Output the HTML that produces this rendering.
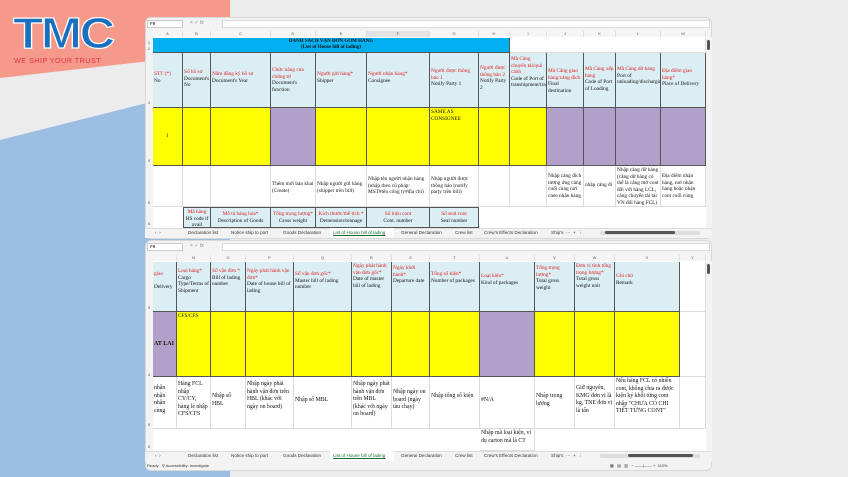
<!DOCTYPE html><html><head><meta charset="utf-8"><style>
*{margin:0;padding:0;box-sizing:border-box}
body{width:848px;height:477px;overflow:hidden;position:relative;background:#ececec;font-family:"Liberation Serif","Noto Serif CJK SC",serif}
.a{position:absolute}
.w{position:absolute;background:#f3f3f3;border-radius:6px;border:1px solid #d8d8d8;overflow:hidden}
.c{position:absolute;border-right:1px solid #555;border-bottom:1px solid #555;font-size:5.3px;line-height:6.6px;padding:1px;color:#111;overflow:hidden}
.g{position:absolute;border-right:1px solid #dcdcdc;border-bottom:1px solid #dcdcdc;font-size:5.3px;line-height:6.6px;padding:1px;color:#111;overflow:hidden;background:#fff}
.h{background:#daeef3}.y{background:#ffff00}.p{background:#b1a0c7}
.r{color:#e02020}
.ch{position:absolute;font-family:"Liberation Sans",sans-serif;font-size:4px;color:#555;text-align:center;background:#f5f5f5;border-right:1px solid #ddd;height:6px;line-height:6px}
.rh{position:absolute;font-family:"Liberation Sans",sans-serif;font-size:4px;color:#555;width:8px;text-align:center}
.tab{position:absolute;font-family:"Liberation Sans",sans-serif;font-size:4.6px;color:#333;white-space:nowrap}
</style></head><body>
<svg class="a" style="left:0;top:0" width="848" height="477">
<polygon points="0,0 230,0 230,52 0,78" fill="#f59a8a"/>
<polygon points="0,140 230,82 230,477 0,477" fill="#9bbee2"/>
</svg>
<div class="a" style="left:13px;top:9px;font-family:'Liberation Sans',sans-serif;font-weight:900;font-size:44px;color:#1a6fc0;letter-spacing:-2px;-webkit-text-stroke:1.2px #fff;transform:scaleX(1.12);transform-origin:left">TMC</div>
<div class="a" style="left:14px;top:56px;font-family:'Liberation Sans',sans-serif;font-size:7.3px;color:#e03040;letter-spacing:0.4px">WE SHIP YOUR TRUST</div>

<!-- TOP WINDOW -->
<div class="w" style="left:145px;top:17px;width:567px;height:222px"></div>
<div class="a" style="left:147px;top:20px;width:36px;height:8px;background:#fff;border:1px solid #ccc;font-family:'Liberation Sans';font-size:4.5px;padding-left:2px">F9</div>
<div class="a" style="left:222px;top:20px;width:488px;height:8px;background:#fff;border:1px solid #ddd"></div>
<div class="a" style="left:190px;top:20px;font-family:'Liberation Sans';font-size:5px;color:#888">× ✓ <i>fx</i></div>
<div class="ch" style="left:153px;top:31px;width:30px">A</div><div class="ch" style="left:183px;top:31px;width:28px">B</div><div class="ch" style="left:211px;top:31px;width:60px">C</div><div class="ch" style="left:271px;top:31px;width:45px">D</div><div class="ch" style="left:316px;top:31px;width:51px">E</div><div class="ch" style="left:367px;top:31px;width:63px;background:#e3e3e3">F</div><div class="ch" style="left:430px;top:31px;width:49px">G</div><div class="ch" style="left:479px;top:31px;width:31px">H</div><div class="ch" style="left:510px;top:31px;width:37px">I</div><div class="ch" style="left:547px;top:31px;width:37px">J</div><div class="ch" style="left:584px;top:31px;width:32px">K</div><div class="ch" style="left:616px;top:31px;width:45px">L</div><div class="ch" style="left:661px;top:31px;width:45px">M</div>
<div class="a" style="left:153px;top:37px;width:553px;height:191px;background:#fff"></div>
<div class="rh" style="left:145px;top:40px">1</div><div class="rh" style="left:145px;top:46px">2</div><div class="rh" style="left:145px;top:100px">3</div><div class="rh" style="left:145px;top:158px">4</div><div class="rh" style="left:145px;top:200px">5</div><div class="rh" style="left:145px;top:221px">6</div>
<div class="c" style="left:153px;top:38px;width:357px;height:15px;background:#00b0f0;text-align:center;font-weight:bold;font-size:5px;line-height:6px">DANH SÁCH VẬN ĐƠN GOM HÀNG<br>(List of House bill of lading)</div>
<div class="g" style="left:510px;top:38px;width:196px;height:15px"></div>
<div class="c h" style="left:153px;top:53px;width:30px;height:55px;padding-top:18px"><span class="r">STT (*)</span><br>No</div>
<div class="c h" style="left:183px;top:53px;width:28px;height:55px;padding-top:16px"><span class="r">Số hồ sơ</span><br>Document's No</div>
<div class="c h" style="left:211px;top:53px;width:60px;height:55px;padding-top:18px"><span class="r">Năm đăng ký hồ sơ</span><br>Document's Year</div>
<div class="c h" style="left:271px;top:53px;width:45px;height:55px;padding-top:14px"><span class="r">Chức năng của chứng từ</span><br>Document's function</div>
<div class="c h" style="left:316px;top:53px;width:51px;height:55px;padding-top:18px"><span class="r">Người gửi hàng*</span><br>Shipper</div>
<div class="c h" style="left:367px;top:53px;width:63px;height:55px;padding-top:18px"><span class="r">Người nhận hàng*</span><br>Consignee</div>
<div class="c h" style="left:430px;top:53px;width:49px;height:55px;padding-top:15px"><span class="r">Người được thông báo 1</span><br>Notify Party 1</div>
<div class="c h" style="left:479px;top:53px;width:31px;height:55px;padding-top:12px"><span class="r">Người được thông báo 2</span><br>Notify Party 2</div>
<div class="c h" style="left:510px;top:53px;width:37px;height:55px;padding-top:3px"><span class="r">Mã Cảng chuyển tải/quá cảnh</span><br>Code of Port of transhipment/transit</div>
<div class="c h" style="left:547px;top:53px;width:37px;height:55px;padding-top:15px"><span class="r">Mã Cảng giao hàng/cảng đích</span><br>Final destination</div>
<div class="c h" style="left:584px;top:53px;width:32px;height:55px;padding-top:13px"><span class="r">Mã Cảng xếp hàng</span><br>Code of Port of Loading</div>
<div class="c h" style="left:616px;top:53px;width:45px;height:55px;padding-top:13px"><span class="r">Mã Cảng dỡ hàng</span><br>Port of unloading/discharging</div>
<div class="c h" style="left:661px;top:53px;width:45px;height:55px;padding-top:15px"><span class="r">Địa điểm giao hàng*</span><br>Place of Delivery</div>
<div class="c y" style="left:153px;top:108px;width:30px;height:58px;text-align:center;padding-top:25px">1</div>
<div class="c y" style="left:183px;top:108px;width:28px;height:58px"></div>
<div class="c y" style="left:211px;top:108px;width:60px;height:58px"></div>
<div class="c p" style="left:271px;top:108px;width:45px;height:58px"></div>
<div class="c y" style="left:316px;top:108px;width:51px;height:58px"></div>
<div class="c y" style="left:367px;top:108px;width:63px;height:58px"></div>
<div class="c y" style="left:430px;top:108px;width:49px;height:58px">SAME AS CONSIGNEE</div>
<div class="c y" style="left:479px;top:108px;width:31px;height:58px"></div>
<div class="c y" style="left:510px;top:108px;width:37px;height:58px"></div>
<div class="c p" style="left:547px;top:108px;width:37px;height:58px"></div>
<div class="c p" style="left:584px;top:108px;width:32px;height:58px"></div>
<div class="c p" style="left:616px;top:108px;width:45px;height:58px"></div>
<div class="c p" style="left:661px;top:108px;width:45px;height:58px"></div>
<div class="g" style="left:153px;top:166px;width:30px;height:41px"></div>
<div class="g" style="left:183px;top:166px;width:28px;height:41px"></div>
<div class="g" style="left:211px;top:166px;width:60px;height:41px"></div>
<div class="g" style="left:271px;top:166px;width:45px;height:41px;padding-top:15px">Thêm mới bản khai (Create)</div>
<div class="g" style="left:316px;top:166px;width:51px;height:41px;padding-top:15px">Nhập người gửi hàng (shipper trên bill)</div>
<div class="g" style="left:367px;top:166px;width:63px;height:41px;padding-top:10px">Nhập tên người nhận hàng (nhập theo cú pháp: MST#tên công ty#địa chỉ)</div>
<div class="g" style="left:430px;top:166px;width:49px;height:41px;padding-top:10px">Nhập người được thông báo (notify party trên bill)</div>
<div class="g" style="left:479px;top:166px;width:31px;height:41px"></div>
<div class="g" style="left:510px;top:166px;width:37px;height:41px"></div>
<div class="g" style="left:547px;top:166px;width:37px;height:41px;padding-top:7px">Nhập cảng đích tương ứng cảng cuối cùng nơi cnee nhận hàng</div>
<div class="g" style="left:584px;top:166px;width:32px;height:41px;padding-top:16px">nhập cảng đi</div>
<div class="g" style="left:616px;top:166px;width:45px;height:41px">Nhập cảng dỡ hàng (cảng dỡ hàng có thể là cảng mở cont đối với hàng LCL, cảng chuyển tải tại VN đối hàng FCL)</div>
<div class="g" style="left:661px;top:166px;width:45px;height:41px;padding-top:7px">Địa điểm nhận hàng, nơi nhận hàng hoặc nhận cont cuối cùng</div>
<div class="c h" style="left:183px;top:207px;width:28px;height:21px;text-align:center;border-left:1px solid #555;border-top:1px solid #555"><span class="r">Mã hàng</span><br>HS code if avail</div>
<div class="c h" style="left:211px;top:207px;width:60px;height:21px;text-align:center;border-top:1px solid #555;padding-top:3px"><span class="r">Mô tả hàng hóa*</span><br>Description of Goods</div>
<div class="c h" style="left:271px;top:207px;width:45px;height:21px;text-align:center;border-top:1px solid #555;padding-top:3px"><span class="r">Tổng trọng lượng*</span><br>Gross weight</div>
<div class="c h" style="left:316px;top:207px;width:51px;height:21px;text-align:center;border-top:1px solid #555;padding-top:3px"><span class="r">Kích thước/thể tích *</span><br>Demension/tonnage</div>
<div class="c h" style="left:367px;top:207px;width:63px;height:21px;text-align:center;border-top:1px solid #555;padding-top:3px"><span class="r">Số hiệu cont</span><br>Cont. number</div>
<div class="c h" style="left:430px;top:207px;width:49px;height:21px;text-align:center;border-top:1px solid #555;padding-top:3px"><span class="r">Số seal cont</span><br>Seal number</div>
<div class="a" style="left:706px;top:37px;width:6px;height:191px;background:#f3f3f3"><div style="margin:3px 1px;width:3px;height:10px;background:#555;border-radius:2px"></div></div>
<div class="a" style="left:145px;top:228px;width:567px;height:10px;background:#f3f3f3;border-top:1px solid #ddd"></div>
<div class="tab" style="left:155px;top:230px">‹ &nbsp;›</div>
<div class="tab" style="left:188px;top:230px">Declaration list</div>
<div class="tab" style="left:231px;top:230px">Notice ship to port</div>
<div class="tab" style="left:283px;top:230px">Goods Declaration</div>
<div class="a" style="left:330px;top:228px;width:64px;height:10px;background:#fff"></div>
<div class="tab" style="left:333px;top:230px;text-decoration:underline;color:#1a6b2e">List of House bill of lading</div>
<div class="tab" style="left:401px;top:230px">General Declaration</div>
<div class="tab" style="left:455px;top:230px">Crew list</div>
<div class="tab" style="left:484px;top:230px">Crew's Effects Declaration</div>
<div class="tab" style="left:551px;top:230px">Ship's &nbsp;⋯ &nbsp;+ &nbsp;⋮</div>
<div class="a" style="left:600px;top:231px;width:100px;height:4px;border-radius:2px;background:#ddd"><div style="margin-left:5px;width:70px;height:3px;background:#555;border-radius:2px"></div></div>

<!-- BOTTOM WINDOW -->
<div class="w" style="left:145px;top:240px;width:567px;height:231px"></div>
<div class="a" style="left:147px;top:243px;width:36px;height:8px;background:#fff;border:1px solid #ccc;font-family:'Liberation Sans';font-size:4.5px;padding-left:2px">F9</div>
<div class="a" style="left:222px;top:243px;width:488px;height:8px;background:#fff;border:1px solid #ddd"></div>
<div class="a" style="left:190px;top:243px;font-family:'Liberation Sans';font-size:5px;color:#888">× ✓ <i>fx</i></div>
<div class="ch" style="left:153px;top:255px;width:24px"></div><div class="ch" style="left:177px;top:255px;width:34px">N</div><div class="ch" style="left:211px;top:255px;width:35px">O</div><div class="ch" style="left:246px;top:255px;width:48px">P</div><div class="ch" style="left:294px;top:255px;width:58px">Q</div><div class="ch" style="left:352px;top:255px;width:40px">R</div><div class="ch" style="left:392px;top:255px;width:38px">S</div><div class="ch" style="left:430px;top:255px;width:50px">T</div><div class="ch" style="left:480px;top:255px;width:55px">U</div><div class="ch" style="left:535px;top:255px;width:40px">V</div><div class="ch" style="left:575px;top:255px;width:40px">W</div><div class="ch" style="left:615px;top:255px;width:65px">X</div><div class="ch" style="left:680px;top:255px;width:26px">Y</div>
<div class="a" style="left:153px;top:261px;width:553px;height:190px;background:#fff"></div>
<div class="rh" style="left:145px;top:305px">3</div><div class="rh" style="left:145px;top:372px">4</div><div class="rh" style="left:145px;top:422px">5</div><div class="rh" style="left:145px;top:444px">6</div>
<div class="c h" style="left:153px;top:262px;width:24px;height:50px;padding-top:9px"><span class="r">giao</span><br><br>Delivery</div>
<div class="c h" style="left:177px;top:262px;width:34px;height:50px;padding-top:6px"><span class="r">Loại hàng*</span><br>Cargo Type/Terms of Shipment</div>
<div class="c h" style="left:211px;top:262px;width:35px;height:50px;padding-top:6px"><span class="r">Số vận đơn *</span><br>Bill of lading number</div>
<div class="c h" style="left:246px;top:262px;width:48px;height:50px;padding-top:6px"><span class="r">Ngày phát hành vận đơn*</span><br>Date of house bill of lading</div>
<div class="c h" style="left:294px;top:262px;width:58px;height:50px;padding-top:9px"><span class="r">Số vận đơn gốc*</span><br>Master bill of lading number</div>
<div class="c h" style="left:352px;top:262px;width:40px;height:50px"><span class="r">Ngày phát hành vận đơn gốc*</span><br>Date of master bill of lading</div>
<div class="c h" style="left:392px;top:262px;width:38px;height:50px;padding-top:3px"><span class="r">Ngày khởi hành*</span><br>Departure date</div>
<div class="c h" style="left:430px;top:262px;width:50px;height:50px;padding-top:9px"><span class="r">Tổng số kiện*</span><br>Number of packages</div>
<div class="c h" style="left:480px;top:262px;width:55px;height:50px;padding-top:11px"><span class="r">Loại kiện*</span><br>Kind of packages</div>
<div class="c h" style="left:535px;top:262px;width:40px;height:50px;padding-top:3px"><span class="r">Tổng trọng lượng*</span><br>Total gross weight</div>
<div class="c h" style="left:575px;top:262px;width:40px;height:50px"><span class="r">Đơn vị tính tổng trọng lượng*</span><br>Total gross weight unit</div>
<div class="c h" style="left:615px;top:262px;width:65px;height:50px;padding-top:11px"><span class="r">Ghi chú</span><br>Remark</div>
<div class="g" style="left:680px;top:262px;width:26px;height:50px"></div>
<div class="c p" style="left:153px;top:312px;width:24px;height:65px;padding-top:29px;font-weight:bold;font-size:6px">AT LAI</div>
<div class="c y" style="left:177px;top:312px;width:34px;height:65px">CFS/CFS</div>
<div class="c y" style="left:211px;top:312px;width:35px;height:65px"></div>
<div class="c y" style="left:246px;top:312px;width:48px;height:65px"></div>
<div class="c y" style="left:294px;top:312px;width:58px;height:65px"></div>
<div class="c y" style="left:352px;top:312px;width:40px;height:65px"></div>
<div class="c y" style="left:392px;top:312px;width:38px;height:65px"></div>
<div class="c y" style="left:430px;top:312px;width:50px;height:65px"></div>
<div class="c p" style="left:480px;top:312px;width:55px;height:65px"></div>
<div class="c y" style="left:535px;top:312px;width:40px;height:65px"></div>
<div class="c y" style="left:575px;top:312px;width:40px;height:65px"></div>
<div class="c y" style="left:615px;top:312px;width:65px;height:65px"></div>
<div class="g" style="left:680px;top:312px;width:26px;height:65px"></div>
<div class="g" style="left:153px;top:377px;width:24px;height:52px;padding-top:8px;font-size:5.8px;line-height:7.5px">nhận<br>nhận<br>nhận<br>cùng</div>
<div class="g" style="left:177px;top:377px;width:34px;height:52px;padding-top:4px;font-size:5.8px;line-height:7.5px">Hàng FCL nhập CY/CY, hàng lẻ nhập CFS/CFS</div>
<div class="g" style="left:211px;top:377px;width:35px;height:52px;padding-top:16px;font-size:5.8px;line-height:7.5px">Nhập số HBL</div>
<div class="g" style="left:246px;top:377px;width:48px;height:52px;padding-top:4px;font-size:5.8px;line-height:7.5px">Nhập ngày phát hành vận đơn trên HBL (khác với ngày on board)</div>
<div class="g" style="left:294px;top:377px;width:58px;height:52px;padding-top:20px;font-size:5.8px;line-height:7.5px">Nhập số MBL</div>
<div class="g" style="left:352px;top:377px;width:40px;height:52px;padding-top:4px;font-size:5.8px;line-height:7.5px">Nhập ngày phát hành vận đơn trên MBL (khác với ngày on board)</div>
<div class="g" style="left:392px;top:377px;width:38px;height:52px;padding-top:12px;font-size:5.8px;line-height:7.5px">Nhập ngày on board (ngày tàu chạy)</div>
<div class="g" style="left:430px;top:377px;width:50px;height:52px;padding-top:16px;font-size:5.8px;line-height:7.5px">Nhập tổng số kiện</div>
<div class="g" style="left:480px;top:377px;width:55px;height:52px;padding-top:20px;font-size:5.8px;line-height:7.5px">#N/A</div>
<div class="g" style="left:535px;top:377px;width:40px;height:52px;padding-top:16px;font-size:5.8px;line-height:7.5px">Nhập trọng lượng</div>
<div class="g" style="left:575px;top:377px;width:40px;height:52px;padding-top:8px;font-size:5.8px;line-height:7.5px">Giữ nguyên, KMG đơn vị là kg, TNE đơn vị là tấn</div>
<div class="g" style="left:615px;top:377px;width:65px;height:52px;font-size:5.8px;line-height:7.5px">Nếu hàng FCL có nhiều cont, không chia ra được kiện ký khối từng cont nhập "CHƯA CÓ CHI TIẾT TỪNG CONT"</div>
<div class="g" style="left:680px;top:377px;width:26px;height:52px"></div>
<div class="g" style="left:480px;top:429px;width:55px;height:22px;font-size:5.8px;line-height:7.5px">Nhập mã loại kiện, ví dụ carton mã là CT</div>
<div class="a" style="left:706px;top:261px;width:6px;height:190px;background:#f3f3f3"><div style="margin:3px 1px;width:3px;height:10px;background:#555;border-radius:2px"></div></div>
<div class="a" style="left:145px;top:451px;width:567px;height:10px;background:#f3f3f3;border-top:1px solid #ddd"></div>
<div class="tab" style="left:155px;top:453px">‹ &nbsp;›</div>
<div class="tab" style="left:188px;top:453px">Declaration list</div>
<div class="tab" style="left:231px;top:453px">Notice ship to port</div>
<div class="tab" style="left:283px;top:453px">Goods Declaration</div>
<div class="a" style="left:330px;top:451px;width:64px;height:10px;background:#fff"></div>
<div class="tab" style="left:333px;top:453px;text-decoration:underline;color:#1a6b2e">List of House bill of lading</div>
<div class="tab" style="left:401px;top:453px">General Declaration</div>
<div class="tab" style="left:455px;top:453px">Crew list</div>
<div class="tab" style="left:484px;top:453px">Crew's Effects Declaration</div>
<div class="tab" style="left:551px;top:453px">Ship's &nbsp;⋯ &nbsp;+ &nbsp;⋮</div>
<div class="a" style="left:600px;top:454px;width:100px;height:4px;border-radius:2px;background:#ddd"><div style="margin-left:28px;width:65px;height:3px;background:#555;border-radius:2px"></div></div>
<div class="tab" style="left:147px;top:463px;font-size:4px">Ready &nbsp; ⚲ Accessibility: Investigate</div>
<div class="tab" style="left:610px;top:463px;font-size:4px">▦ &nbsp; ▤ &nbsp; ▥ &nbsp; − ——|—— + &nbsp;110%</div>
</body></html>
